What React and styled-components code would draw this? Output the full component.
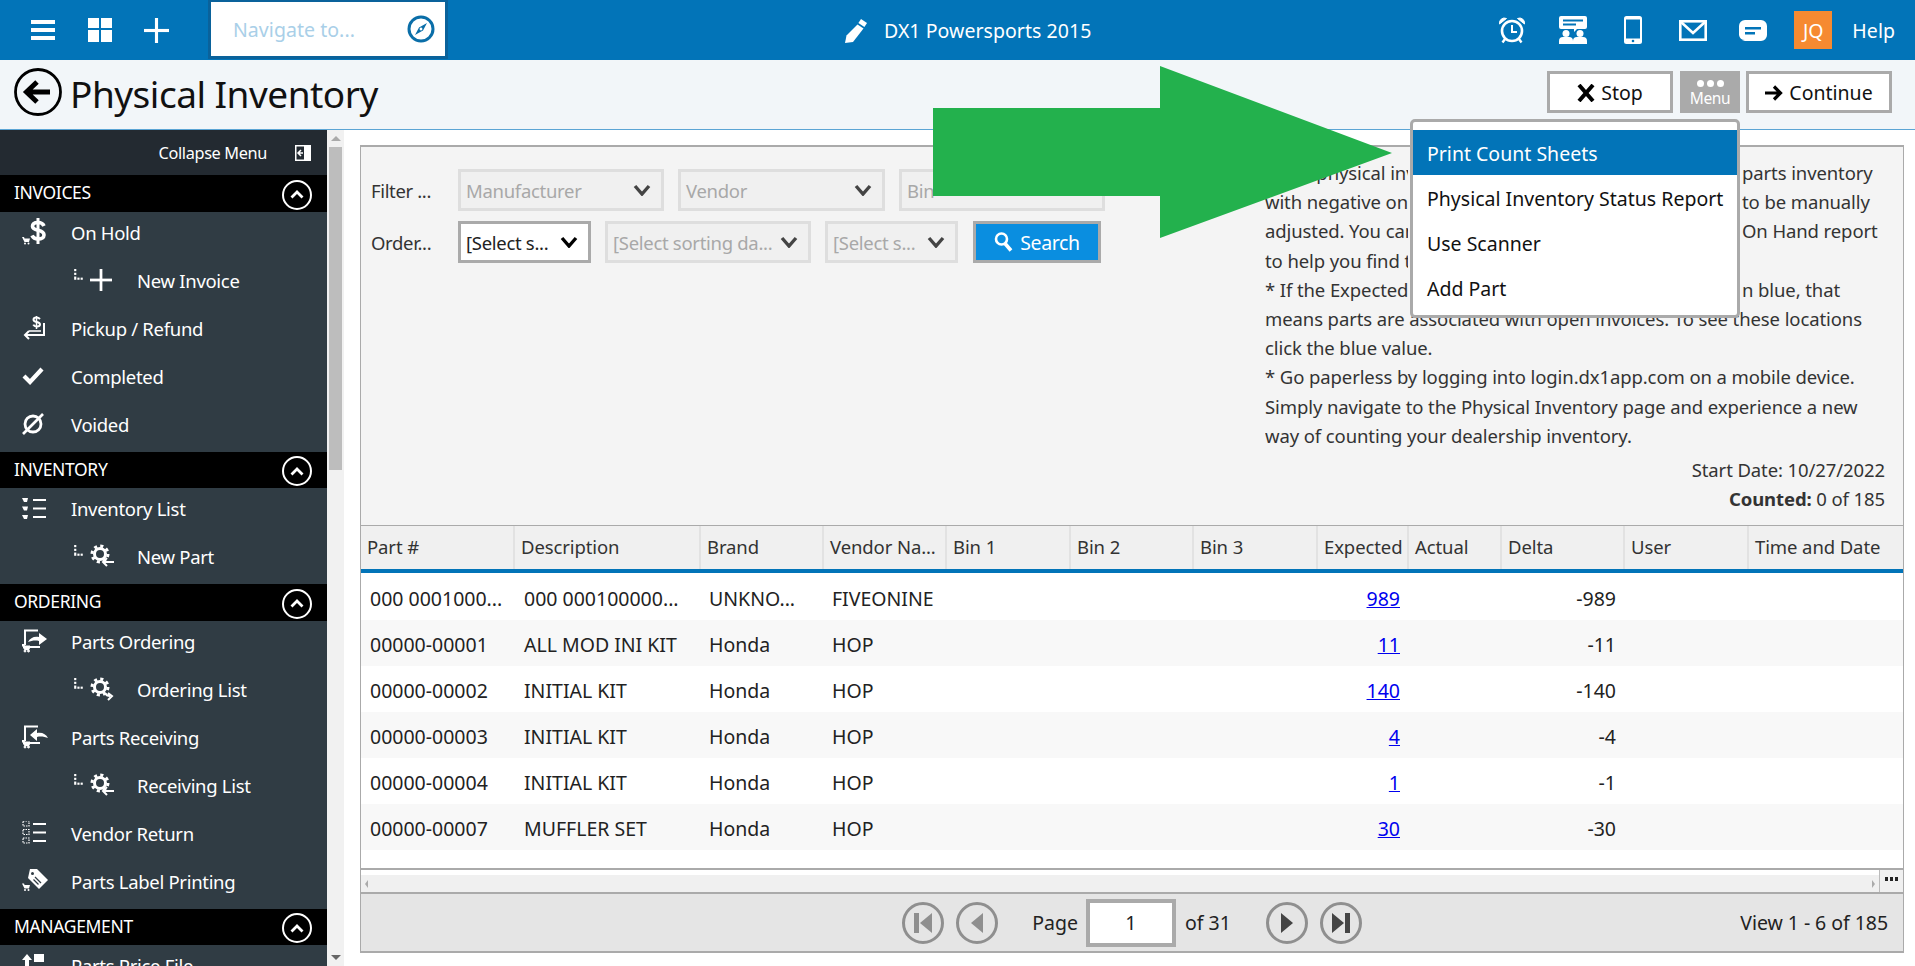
import React from 'react';
import styled, { createGlobalStyle } from 'styled-components';

const FONT = '"Noto Sans", "Open Sans", sans-serif';

const rows = [
	{ part: '000 0001000...', desc: '000 000100000...', brand: 'UNKNO...', vendor: 'FIVEONINE', expected: '989', delta: '-989' },
	{ part: '00000-00001', desc: 'ALL MOD INI KIT', brand: 'Honda', vendor: 'HOP', expected: '11', delta: '-11' },
	{ part: '00000-00002', desc: 'INITIAL KIT', brand: 'Honda', vendor: 'HOP', expected: '140', delta: '-140' },
	{ part: '00000-00003', desc: 'INITIAL KIT', brand: 'Honda', vendor: 'HOP', expected: '4', delta: '-4' },
	{ part: '00000-00004', desc: 'INITIAL KIT', brand: 'Honda', vendor: 'HOP', expected: '1', delta: '-1' },
	{ part: '00000-00007', desc: 'MUFFLER SET', brand: 'Honda', vendor: 'HOP', expected: '30', delta: '-30' },
];

const headers = ['Part #', 'Description', 'Brand', 'Vendor Na...', 'Bin 1', 'Bin 2', 'Bin 3', 'Expected', 'Actual', 'Delta', 'User', 'Time and Date'];

const COLUMNS = '154px 186px 123px 123px 124px 123px 124px 91px 93px 123px 124px 154px';

// the popup menu covers the middle of the first lines, only the visible ends are kept
const helpLines = [
	['* The physical inv', 'parts inventory'],
	['with negative on', 'to be manually'],
	['adjusted. You can', 'On Hand report'],
	['to help you find t', ''],
	['* If the Expected', 'n blue, that'],
	['means parts are associated with open invoices. To see these locations', ''],
	['click the blue value.', ''],
	['* Go paperless by logging into login.dx1app.com on a mobile device.', ''],
	['Simply navigate to the Physical Inventory page and experience a new', ''],
	['way of counting your dealership inventory.', ''],
];

const GlobalStyle = createGlobalStyle`
	html, body {
		margin: 0;
		padding: 0;
		background: #fff;
		overflow: hidden;
	}
	* {
		box-sizing: border-box;
	}
`;

const Page = styled.div`
	position: relative;
	width: 1915px;
	height: 966px;
	overflow: hidden;
	font-family: ${FONT};
	color: #222;
	letter-spacing: -0.35px;
`;

const TopBar = styled.div`
	display: flex;
	align-items: center;
	height: 60px;
	background: #0274b8;
	color: #fff;
	font-size: 19.5px;
	letter-spacing: 0.05px;
`;

const TopIcons = styled.div`
	display: flex;
	align-items: center;
	width: 208px;
	padding-left: 31px;
	gap: 32.5px;
`;

const NavigateBox = styled.div`
	display: flex;
	align-items: center;
	justify-content: space-between;
	width: 240px;
	height: 59px;
	margin-bottom: 1px;
	padding: 0 10px 0 22px;
	background: #fff;
	border: 3px solid #0a629b;
	border-top-width: 2px;
	color: #a9cfe8;
`;

const AppTitle = styled.div`
	display: flex;
	align-items: center;
	gap: 16px;
	margin-left: 395px;
`;

const TopRight = styled.div`
	display: flex;
	align-items: center;
	margin-left: auto;
	padding-right: 20px;
`;

const TopSlot = styled.div`
	display: flex;
	align-items: center;
	margin-left: ${p => p.$ml || 0}px;
`;

const UserBadge = styled(TopSlot)`
	justify-content: center;
	width: 38px;
	height: 38px;
	background: #f68a31;
`;

const TitleBar = styled.div`
	display: flex;
	align-items: center;
	height: 70px;
	padding: 0 23px 6px 14px;
	background: #f2f6f9;
	border-bottom: 1px solid #5ba5d5;
`;

const PageTitle = styled.h1`
	margin: 4px 0 0 8px;
	font-size: 37px;
	font-weight: 400;
	color: #111;
	letter-spacing: -0.5px;
`;

const Actions = styled.div`
	display: flex;
	align-items: center;
	margin-left: auto;
	gap: 6px;
`;

const ActionButton = styled.div`
	display: flex;
	align-items: center;
	justify-content: center;
	gap: 6px;
	width: ${p => p.$w}px;
	height: 42px;
	padding-top: 2px;
	background: #fff;
	border: 3px solid #aaa;
	font-size: 19.5px;
	letter-spacing: 0;
	color: #111;
`;

const MenuWrap = styled.div`
	position: relative;
	margin-left: 1px;
`;

const MenuButton = styled.div`
	display: flex;
	flex-direction: column;
	align-items: center;
	width: 60px;
	height: 42px;
	padding-top: 9px;
	background: #aaa;
	color: #fff;
	font-size: 15.5px;
	line-height: 17px;
`;

const Dots = styled.div`
	display: flex;
	gap: 3px;
	margin-bottom: 3px;
`;

const Dot = styled.span`
	width: 7px;
	height: 7px;
	border-radius: 50%;
	background: #fff;
`;

const Dropdown = styled.div`
	position: absolute;
	top: 48px;
	right: 0;
	z-index: 5;
	width: 330px;
	height: 199px;
	padding-top: 8px;
	background: #fff;
	border: 3px solid #aaa;
	border-radius: 5px;
`;

const DropdownItem = styled.div`
	display: flex;
	align-items: center;
	height: 45px;
	padding: 2px 0 0 14px;
	font-size: 19.5px;
	letter-spacing: 0;
	white-space: nowrap;
	color: ${p => (p.$active ? '#fff' : '#111')};
	background: ${p => (p.$active ? '#0274b8' : '#fff')};
`;

const GreenArrow = styled.svg`
	position: absolute;
	top: 66px;
	left: 933px;
	z-index: 4;
`;

const Body = styled.div`
	display: flex;
	height: 836px;
`;

const Sidebar = styled.div`
	width: 327px;
	height: 836px;
	overflow: hidden;
	flex-shrink: 0;
	background: #303c44;
	color: #fff;
`;

const CollapseRow = styled.div`
	display: flex;
	align-items: center;
	justify-content: flex-end;
	height: 45px;
	padding-right: 16px;
	gap: 28px;
	background: #232a31;
	font-size: 16.3px;
`;

const SectionHead = styled.div`
	display: flex;
	align-items: center;
	justify-content: space-between;
	height: 36.5px;
	padding: 0 15px 0 14px;
	background: #000;
	font-size: 17.5px;
`;

const SectionName = styled.span`
	margin-bottom: 2px;
`;

const SectionToggle = styled.div`
	display: flex;
	align-items: center;
	justify-content: center;
	width: 30px;
	height: 30px;
	margin-top: 3px;
	border: 2.5px solid #fff;
	border-radius: 50%;
`;

const NavItem = styled.div`
	display: flex;
	align-items: center;
	height: 48px;
	padding: 0 0 7px ${p => (p.$sub ? 74 : 22)}px;
	font-size: 18.5px;
	letter-spacing: -0.3px;
	white-space: nowrap;
`;

const NavIcon = styled.div`
	display: flex;
	align-items: center;
	width: ${p => (p.$sub ? 63 : 49)}px;
	flex-shrink: 0;
`;

const SubIconRow = styled.div`
	display: flex;
	align-items: center;
	gap: 6px;
`;

const ConnectorMark = styled.svg`
	margin-bottom: 9px;
`;

const VScroll = styled.div`
	display: flex;
	flex-direction: column;
	align-items: center;
	width: 17px;
	height: 836px;
	flex-shrink: 0;
	background: #f1f1f1;
`;

const ScrollArrow = styled.div`
	width: 0;
	height: 0;
	margin: ${p => (p.$down ? 'auto 0 6px' : '6px 0 5px')};
	border-left: 5px solid transparent;
	border-right: 5px solid transparent;
	border-bottom: ${p => (p.$down ? '0' : '5px solid #aaa')};
	border-top: ${p => (p.$down ? '5px solid #666' : '0')};
`;

const ScrollThumb = styled.div`
	width: 13px;
	height: 323px;
	margin-top: 1px;
	background: #bdbdbd;
`;

const Content = styled.div`
	flex: 1;
	padding: 15px 11px 0 16px;
`;

const Panel = styled.div`
	display: flex;
	flex-direction: column;
	height: 808px;
	border: 1px solid #aaa;
	border-top-width: 2px;
	border-bottom-width: 2px;
	background: #f4f4f4;
`;

const PanelTop = styled.div`
	display: flex;
	justify-content: space-between;
	height: 378px;
`;

const FilterForm = styled.div`
	display: flex;
	flex-direction: column;
	gap: 10px;
	padding: 22px 0 0 10px;
`;

const FilterRow = styled.div`
	display: flex;
	align-items: center;
	gap: 14px;
`;

const FilterLabel = styled.div`
	width: 73px;
	font-size: 18.5px;
	color: #333;
`;

const SelectBox = styled.div`
	display: flex;
	align-items: center;
	justify-content: space-between;
	width: ${p => p.$w}px;
	height: 42px;
	padding: 0 10px 0 5px;
	border: 3px solid ${p => (p.$on ? '#aaa' : '#dedede')};
	background: ${p => (p.$on ? '#fff' : '#f0f0f0')};
	color: ${p => (p.$on ? '#222' : '#a8a8a8')};
	font-size: 18.5px;
	letter-spacing: -0.3px;
	white-space: nowrap;
`;

const SearchButton = styled.div`
	display: flex;
	align-items: center;
	justify-content: center;
	gap: 6px;
	width: 128px;
	height: 42px;
	margin-left: 1px;
	background: #0a8ee0;
	border: 3px solid #aaa;
	color: #fff;
	font-size: 19.5px;
`;

const HelpColumn = styled.div`
	width: 620px;
	margin-right: 18px;
	padding-top: 11px;
	font-size: 18.5px;
	line-height: 29.2px;
	letter-spacing: -0.1px;
	color: #333;
`;

const HelpLine = styled.div`
	display: flex;
	white-space: nowrap;
`;

const HelpLeft = styled.span`
	width: ${p => (p.$cut ? '143px' : 'auto')};
	margin-right: ${p => (p.$cut ? '334px' : '0')};
	overflow: hidden;
`;

const StartBlock = styled.div`
	margin-top: 5px;
	text-align: right;
`;

const HeadRow = styled.div`
	display: grid;
	grid-template-columns: ${COLUMNS};
	height: 48px;
	background: #f0f0f0;
	border-top: 1px solid #aaa;
	border-bottom: 4px solid #0274b8;
`;

const HeadCell = styled.div`
	display: flex;
	align-items: center;
	padding: 0 0 2px 6px;
	border-right: 2px solid #e2e2e2;
	font-size: 18.5px;
	letter-spacing: -0.1px;
	white-space: nowrap;
	color: #333;
	&:last-child {
		border-right: 0;
	}
`;

const TableBody = styled.div`
	flex: 1;
	background: #fff;
	padding-top: 1px;
`;

const DataRow = styled.div`
	display: grid;
	grid-template-columns: ${COLUMNS};
	align-items: center;
	height: 46px;
	padding-top: 2px;
	background: ${p => (p.$odd ? '#f8f8f8' : '#fff')};
	font-size: 19.5px;
	letter-spacing: 0;
	color: #222;
`;

const DataCell = styled.div`
	padding: 0 ${p => (p.$right ? 9 : 0)}px 0 ${p => (p.$right ? 0 : 8)}px;
	text-align: ${p => (p.$right ? 'right' : 'left')};
	white-space: nowrap;
	&:nth-child(-n + 2) {
		padding-left: 9px;
	}
`;

const BlueLink = styled.a`
	color: #0000ee;
	text-decoration: underline;
`;

const HScroll = styled.div`
	display: flex;
	height: 24px;
	background: #fff;
	border-top: 2px solid #aaa;
`;

const HTrack = styled.div`
	display: flex;
	flex: 1;
	align-items: center;
	justify-content: space-between;
	margin-top: 5px;
	padding: 0 4px;
	background: #f0f0f0;
`;

const HArrow = styled.div`
	width: 0;
	height: 0;
	border-top: 4px solid transparent;
	border-bottom: 4px solid transparent;
	border-right: ${p => (p.$right ? '0' : '3px solid #aaa')};
	border-left: ${p => (p.$right ? '3px solid #aaa' : '0')};
`;

const HCorner = styled.div`
	display: flex;
	justify-content: center;
	gap: 2px;
	width: 24px;
	padding-top: 7px;
	background: #f0f0f0;
	border-left: 1px solid #bbb;
`;

const CornerDot = styled.span`
	width: 3px;
	height: 4px;
	background: #222;
`;

const Pager = styled.div`
	display: grid;
	grid-template-columns: 1fr auto 1fr;
	align-items: center;
	height: 59px;
	background: #e5e5e5;
	border-top: 2px solid #aaa;
	font-size: 19.5px;
	letter-spacing: 0;
	color: #222;
`;

const PagerCenter = styled.div`
	display: flex;
	align-items: center;
	grid-column: 2;
`;

const PagerButton = styled.div`
	display: flex;
	align-items: center;
	justify-content: center;
	width: 42px;
	height: 42px;
	margin-left: ${p => p.$ml || 0}px;
	border: 3px solid #8f8f8f;
	border-radius: 50%;
`;

const PageLabel = styled.span`
	margin-left: 34px;
`;

const PageInput = styled.div`
	display: flex;
	align-items: center;
	justify-content: center;
	width: 90px;
	height: 48px;
	margin: 0 9px 0 8px;
	background: #fff;
	border: 4px solid #aaa;
`;

const ViewText = styled.div`
	justify-self: end;
	margin-right: 15px;
	letter-spacing: -0.05px;
	white-space: nowrap;
`;

const Hamburger = () => (
	<svg width="24" height="20" viewBox="0 0 24 20" fill="#fff">
		<rect width="24" height="4" />
		<rect y="8" width="24" height="4" />
		<rect y="16" width="24" height="4" />
	</svg>
);

const GridIcon = () => (
	<svg width="24" height="24" viewBox="0 0 24 24" fill="#fff">
		<rect width="11" height="10" />
		<rect x="13" width="11" height="10" />
		<rect y="12" width="11" height="12" />
		<rect x="13" y="12" width="11" height="12" />
	</svg>
);

const PlusIcon = ({ size = 25 }) => (
	<svg width={size} height={size} viewBox="0 0 24 24" fill="#fff">
		<rect x="10.5" width="3" height="24" />
		<rect y="10.5" width="24" height="3" />
	</svg>
);

const CompassIcon = () => (
	<svg width="28" height="28" viewBox="0 0 28 28">
		<circle cx="14" cy="14" r="12" fill="none" stroke="#0a6ea8" strokeWidth="3" />
		<path d="M20 8l-8 4.5-4 7.5 8-4.5z M14 12.6a1.4 1.4 0 1 0 .01 0z" fill="#0a6ea8" fillRule="evenodd" />
	</svg>
);

const PencilIcon = () => (
	<svg width="25" height="25" viewBox="0 0 25 25" fill="#fff">
		<path d="M18 1l6 4-2.6 4-6-4z" />
		<path d="M14.5 6.5l6 4L10 24l-8 1 1.500-7.500z" />
	</svg>
);

const AlarmIcon = () => (
	<svg width="28" height="28" viewBox="0 0 28 28" fill="none" stroke="#fff">
		<circle cx="14" cy="15" r="10" strokeWidth="2.6" />
		<path d="M14 9v7h5" strokeWidth="2" />
		<path d="M1.500 8a5 5 0 0 1 7-5.500z M26.500 8a5 5 0 0 0-7-5.500z" fill="#fff" strokeWidth="1" />
		<path d="M7 23l-2.500 3.500 M21 23l2.500 3.500" strokeWidth="2.4" />
	</svg>
);

const PeopleChatIcon = () => (
	<svg width="28" height="28" viewBox="0 0 28 28" fill="#fff">
		<path d="M2 0h24a2 2 0 0 1 2 2v9a2 2 0 0 1-2 2h-8l-3 3v-3H2a2 2 0 0 1-2-2V2a2 2 0 0 1 2-2z" />
		<rect x="4" y="3.500" width="20" height="2" fill="#0274b8" />
		<rect x="4" y="7.500" width="13" height="2" fill="#0274b8" />
		<circle cx="7" cy="17.500" r="3.500" />
		<circle cx="21" cy="17.500" r="3.500" />
		<path d="M0 28v-3a4 4 0 0 1 4-4h6a4 4 0 0 1 4 4 4 4 0 0 1 4-4h6a4 4 0 0 1 4 4v3z" />
	</svg>
);

const PhoneIcon = () => (
	<svg width="18" height="28" viewBox="0 0 18 28">
		<rect width="18" height="28" rx="2.500" fill="#fff" />
		<rect x="2" y="3.500" width="14" height="19" fill="#0274b8" />
		<circle cx="9" cy="25" r="1.300" fill="#0274b8" />
	</svg>
);

const MailIcon = () => (
	<svg width="28" height="21" viewBox="0 0 28 21" fill="none" stroke="#fff" strokeWidth="2.600">
		<rect x="1.300" y="1.300" width="25.400" height="18.400" />
		<path d="M2 2l12 11L26 2" />
	</svg>
);

const MessageIcon = () => (
	<svg width="28" height="21" viewBox="0 0 28 21">
		<path d="M6 0h16a6 6 0 0 1 6 6v9a6 6 0 0 1-6 6H3l3-1a6 6 0 0 1-6-5V6a6 6 0 0 1 6-6z" fill="#fff" />
		<rect x="6" y="7" width="16" height="2.500" fill="#0274b8" />
		<rect x="6" y="12" width="10" height="2.500" fill="#0274b8" />
	</svg>
);

const BackIcon = () => (
	<svg width="48" height="48" viewBox="0 0 48 48" fill="none" stroke="#000">
		<circle cx="24" cy="24" r="22.500" strokeWidth="2.800" />
		<path d="M36 24H13 M23 14L12.500 24 23 34" strokeWidth="5" />
	</svg>
);

const StopX = () => (
	<svg width="18" height="18" viewBox="0 0 18 18" stroke="#000" strokeWidth="4">
		<path d="M2 1l14 16 M16 1L2 17" />
	</svg>
);

const RightArrow = () => (
	<svg width="18" height="16" viewBox="0 0 18 16" fill="none" stroke="#000" strokeWidth="3.200">
		<path d="M0 8h15 M9 1.500L15.500 8 9 14.500" />
	</svg>
);

const Chevron = ({ off }) => (
	<svg width="18" height="12" viewBox="0 0 18 12" fill="none" stroke={off ? '#444' : '#000'} strokeWidth="3.400">
		<path d="M2 2l7 8 7-8" />
	</svg>
);

const ChevronUp = () => (
	<svg width="14" height="9" viewBox="0 0 14 9" fill="none" stroke="#fff" strokeWidth="2.800">
		<path d="M1.500 7.500L7 2l5.500 5.500" />
	</svg>
);

const CollapseIcon = () => (
	<svg width="16" height="16" viewBox="0 0 16 16">
		<rect width="16" height="16" fill="#fff" />
		<rect x="1.500" y="1.500" width="7.500" height="13" fill="#232a31" />
		<path d="M8 8H3.500 M6 5L3 8l3 3" fill="none" stroke="#fff" strokeWidth="1.500" />
	</svg>
);

const SearchIcon = () => (
	<svg width="20" height="20" viewBox="0 0 20 20" fill="none" stroke="#fff">
		<circle cx="7.500" cy="7" r="5.500" strokeWidth="2.600" />
		<path d="M11 11.500l6 7" strokeWidth="3.600" />
	</svg>
);

const Cart = ({ x, y }) => (
	<g transform={`translate(${x} ${y})`} fill="#fff">
		<path d="M0 0h2l.6 1.500H8L7 5H2.500z" />
		<circle cx="3" cy="6.500" r="1" />
		<circle cx="6.500" cy="6.500" r="1" />
	</g>
);

const DollarIcon = () => (
	<svg width="26" height="28" viewBox="0 0 26 28" fill="none">
		<path d="M22 8c-1-2.500-3-3.500-6-3.500-3.500 0-5.500 1.500-5.500 3.800 0 5.500 11.500 2.500 11.500 8.700 0 2.500-2.500 4-5.800 4-3.200 0-5.200-1.300-6.200-3.500" stroke="#fff" strokeWidth="3.600" />
		<path d="M16 0v26" stroke="#fff" strokeWidth="3" />
		<Cart x={0} y={19} />
	</svg>
);

const PickupIcon = () => (
	<svg width="24" height="24" viewBox="0 0 24 24" fill="none" stroke="#fff">
		<path d="M18 3c-1-1-2-1.500-3.500-1.500-2 0-3 1-3 2.200 0 3 6.500 1.500 6.500 4.600 0 1.300-1.300 2.200-3.200 2.200-1.700 0-3-.7-3.500-1.800" strokeWidth="2" />
		<path d="M14.500 0v13" strokeWidth="1.500" />
		<path d="M22 7v12H3 M7 15l-4 4 4 4" strokeWidth="2" />
		<path d="M7 15h12" strokeWidth="1.500" />
	</svg>
);

const CheckIcon = () => (
	<svg width="22" height="18" viewBox="0 0 22 18" fill="none" stroke="#fff" strokeWidth="4.200">
		<path d="M2 9l6 6L20 2" />
	</svg>
);

const VoidIcon = () => (
	<svg width="22" height="22" viewBox="0 0 22 22" fill="none" stroke="#fff">
		<circle cx="11" cy="11" r="8" strokeWidth="2.800" />
		<path d="M1 21L21 1" strokeWidth="2.600" />
	</svg>
);

const ListIcon = ({ box }) => (
	<svg width="24" height="24" viewBox="0 0 24 24" fill="#fff">
		{[2, 10.5, 19].map(y => (
			<g key={y}>
				{box ? (
					<rect x="1" y={y - 2} width="6" height="5" fill="none" stroke="#fff" strokeWidth="1.200" strokeDasharray="1.500 1" />
				) : (
					<path d={`M0 ${y - 1}h6l-1 4H2z`} />
				)}
				<rect x="11" y={y} width="13" height="2" />
			</g>
		))}
	</svg>
);

const CartBoxIcon = ({ back }) => (
	<svg width="26" height="24" viewBox="0 0 26 24" fill="none" stroke="#fff">
		<path d="M3 16V1.500h13 M3 18h15" strokeWidth="2" />
		<path
			d={back ? 'M26 13c-2-4-6-6-11-5V4l-7 6 7 6v-4c4-1 8 0 11 1z' : 'M6 13c2-4 6-6 11-5V4l8 6-8 6v-4c-4-1-8 0-11 1z'}
			fill="#fff"
			stroke="none"
		/>
		<Cart x={0} y={15.500} />
	</svg>
);

const TagIcon = () => (
	<svg width="26" height="24" viewBox="0 0 26 24">
		<path d="M8 0h7l11 11-9 9L6 9z" fill="#fff" />
		<path d="M13 8l6 6 M11.500 10.500l5 5" stroke="#303c44" strokeWidth="1.300" />
		<circle cx="10.500" cy="4.500" r="1.500" fill="#303c44" />
		<Cart x={0} y={14.500} />
	</svg>
);

const PriceIcon = () => (
	<svg width="24" height="24" viewBox="0 0 24 24" fill="#fff">
		<path d="M5 0l5 6H7v10H3V6H0z" />
		<rect x="12" y="0" width="10" height="8" />
	</svg>
);

const Connector = () => (
	<ConnectorMark width="10" height="14" viewBox="0 0 9 13" fill="#fff">
		<rect x="0" y="0" width="2" height="2" />
		<rect x="0" y="3.500" width="2" height="2" />
		<rect x="0" y="7" width="2" height="3" />
		<rect x="3" y="8" width="2" height="2" />
		<rect x="6" y="8" width="2" height="2" />
	</ConnectorMark>
);

const SubPlus = () => (
	<SubIconRow>
		<Connector />
		<PlusIcon size={22} />
	</SubIconRow>
);

const SubGear = ({ kind }) => (
	<SubIconRow>
		<Connector />
		<svg width="25" height="25" viewBox="0 0 25 25" fill="none" stroke="#fff">
			<circle cx="10" cy="10" r="5.500" strokeWidth="3" />
			<circle cx="10" cy="10" r="8" strokeWidth="3" strokeDasharray="3.100 3.180" />
			{kind === 'in' ? (
				<path d="M24 18H13 M17 14l-4 4 4 4" strokeWidth="2" />
			) : (
				<path d="M15 16c1 2 2 3 5 3 M18 23l4-4-4-3" strokeWidth="2" />
			)}
		</svg>
	</SubIconRow>
);

const sections = [
	{
		title: 'INVOICES',
		items: [
			{ label: 'On Hold', icon: <DollarIcon /> },
			{ label: 'New Invoice', icon: <SubPlus />, sub: true },
			{ label: 'Pickup / Refund', icon: <PickupIcon /> },
			{ label: 'Completed', icon: <CheckIcon /> },
			{ label: 'Voided', icon: <VoidIcon /> },
		],
	},
	{
		title: 'INVENTORY',
		items: [
			{ label: 'Inventory List', icon: <ListIcon /> },
			{ label: 'New Part', icon: <SubGear kind="in" />, sub: true },
		],
	},
	{
		title: 'ORDERING',
		items: [
			{ label: 'Parts Ordering', icon: <CartBoxIcon /> },
			{ label: 'Ordering List', icon: <SubGear kind="out" />, sub: true },
			{ label: 'Parts Receiving', icon: <CartBoxIcon back /> },
			{ label: 'Receiving List', icon: <SubGear kind="in" />, sub: true },
			{ label: 'Vendor Return', icon: <ListIcon box /> },
			{ label: 'Parts Label Printing', icon: <TagIcon /> },
		],
	},
	{
		title: 'MANAGEMENT',
		items: [{ label: 'Parts Price File', icon: <PriceIcon /> }],
	},
];

const PagerIcon = ({ flip, bar, color }) => (
	<svg width="24" height="26" viewBox="0 0 24 26" fill={color} transform={flip ? 'scale(-1 1)' : undefined}>
		<path d={bar ? 'M3 3l12 10L3 23z' : 'M6 3l12 10L6 23z'} />
		{bar && <rect x="16" y="3" width="5" height="20" />}
	</svg>
);

export default function App() {
	return (
		<Page>
			<GlobalStyle />
			<TopBar>
				<TopIcons>
					<Hamburger />
					<GridIcon />
					<PlusIcon />
				</TopIcons>
				<NavigateBox>
					Navigate to...
					<CompassIcon />
				</NavigateBox>
				<AppTitle>
					<PencilIcon />
					DX1 Powersports 2015
				</AppTitle>
				<TopRight>
					<TopSlot><AlarmIcon /></TopSlot>
					<TopSlot $ml={33}><PeopleChatIcon /></TopSlot>
					<TopSlot $ml={37}><PhoneIcon /></TopSlot>
					<TopSlot $ml={37}><MailIcon /></TopSlot>
					<TopSlot $ml={32}><MessageIcon /></TopSlot>
					<UserBadge $ml={27}>JQ</UserBadge>
					<TopSlot $ml={20}>Help</TopSlot>
				</TopRight>
			</TopBar>

			<TitleBar>
				<BackIcon />
				<PageTitle>Physical Inventory</PageTitle>
				<Actions>
					<ActionButton $w={126}>
						<StopX />
						Stop
					</ActionButton>
					<MenuWrap>
						<MenuButton>
							<Dots>
								<Dot />
								<Dot />
								<Dot />
							</Dots>
							Menu
						</MenuButton>
						<Dropdown>
							<DropdownItem $active>Print Count Sheets</DropdownItem>
							<DropdownItem>Physical Inventory Status Report</DropdownItem>
							<DropdownItem>Use Scanner</DropdownItem>
							<DropdownItem>Add Part</DropdownItem>
						</Dropdown>
					</MenuWrap>
					<ActionButton $w={146}>
						<RightArrow />
						Continue
					</ActionButton>
				</Actions>
			</TitleBar>

			<GreenArrow width="460" height="172" viewBox="0 0 460 172">
				<path d="M0 42h227V0l232 87-232 85v-42H0z" fill="#23b14d" />
			</GreenArrow>

			<Body>
				<Sidebar>
					<CollapseRow>
						Collapse Menu
						<CollapseIcon />
					</CollapseRow>
					{sections.map(section => (
						<div key={section.title}>
							<SectionHead>
								<SectionName>{section.title}</SectionName>
								<SectionToggle>
									<ChevronUp />
								</SectionToggle>
							</SectionHead>
							{section.items.map(item => (
								<NavItem key={item.label} $sub={item.sub}>
									<NavIcon $sub={item.sub}>{item.icon}</NavIcon>
									{item.label}
								</NavItem>
							))}
						</div>
					))}
				</Sidebar>
				<VScroll>
					<ScrollArrow />
					<ScrollThumb />
					<ScrollArrow $down />
				</VScroll>

				<Content>
					<Panel>
						<PanelTop>
							<FilterForm>
								<FilterRow>
									<FilterLabel>Filter ...</FilterLabel>
									<SelectBox $w={206}>
										Manufacturer
										<Chevron off />
									</SelectBox>
									<SelectBox $w={207}>
										Vendor
										<Chevron off />
									</SelectBox>
									<SelectBox $w={206}>Bin</SelectBox>
								</FilterRow>
								<FilterRow>
									<FilterLabel>Order...</FilterLabel>
									<SelectBox $w={133} $on>
										[Select s...
										<Chevron />
									</SelectBox>
									<SelectBox $w={206}>
										[Select sorting da...
										<Chevron off />
									</SelectBox>
									<SelectBox $w={133}>
										[Select s...
										<Chevron off />
									</SelectBox>
									<SearchButton>
										<SearchIcon />
										Search
									</SearchButton>
								</FilterRow>
							</FilterForm>
							<HelpColumn>
								{helpLines.map(([left, right], i) => (
									<HelpLine key={left}>
										<HelpLeft $cut={i < 5}>{left}</HelpLeft>
										{right && <span>{right}</span>}
									</HelpLine>
								))}
								<StartBlock>
									Start Date: 10/27/2022
									<br />
									<b>Counted:</b> 0 of 185
								</StartBlock>
							</HelpColumn>
						</PanelTop>

						<HeadRow>
							{headers.map(h => (
								<HeadCell key={h}>{h}</HeadCell>
							))}
						</HeadRow>
						<TableBody>
							{rows.map((row, i) => (
								<DataRow key={row.part} $odd={i % 2 === 1}>
									<DataCell>{row.part}</DataCell>
									<DataCell>{row.desc}</DataCell>
									<DataCell>{row.brand}</DataCell>
									<DataCell>{row.vendor}</DataCell>
									<DataCell />
									<DataCell />
									<DataCell />
									<DataCell $right>
										<BlueLink href="#">{row.expected}</BlueLink>
									</DataCell>
									<DataCell />
									<DataCell $right>{row.delta}</DataCell>
									<DataCell />
									<DataCell />
								</DataRow>
							))}
						</TableBody>
						<HScroll>
							<HTrack>
								<HArrow />
								<HArrow $right />
							</HTrack>
							<HCorner>
								<CornerDot />
								<CornerDot />
								<CornerDot />
							</HCorner>
						</HScroll>
						<Pager>
							<PagerCenter>
								<PagerButton><PagerIcon flip bar color="#8f8f8f" /></PagerButton>
								<PagerButton $ml={12}><PagerIcon flip color="#8f8f8f" /></PagerButton>
								<PageLabel>Page</PageLabel>
								<PageInput>1</PageInput>
								<span>of 31</span>
								<PagerButton $ml={35}><PagerIcon color="#444" /></PagerButton>
								<PagerButton $ml={12}><PagerIcon bar color="#444" /></PagerButton>
							</PagerCenter>
							<ViewText>View 1 - 6 of 185</ViewText>
						</Pager>
					</Panel>
				</Content>
			</Body>
		</Page>
	);
}
